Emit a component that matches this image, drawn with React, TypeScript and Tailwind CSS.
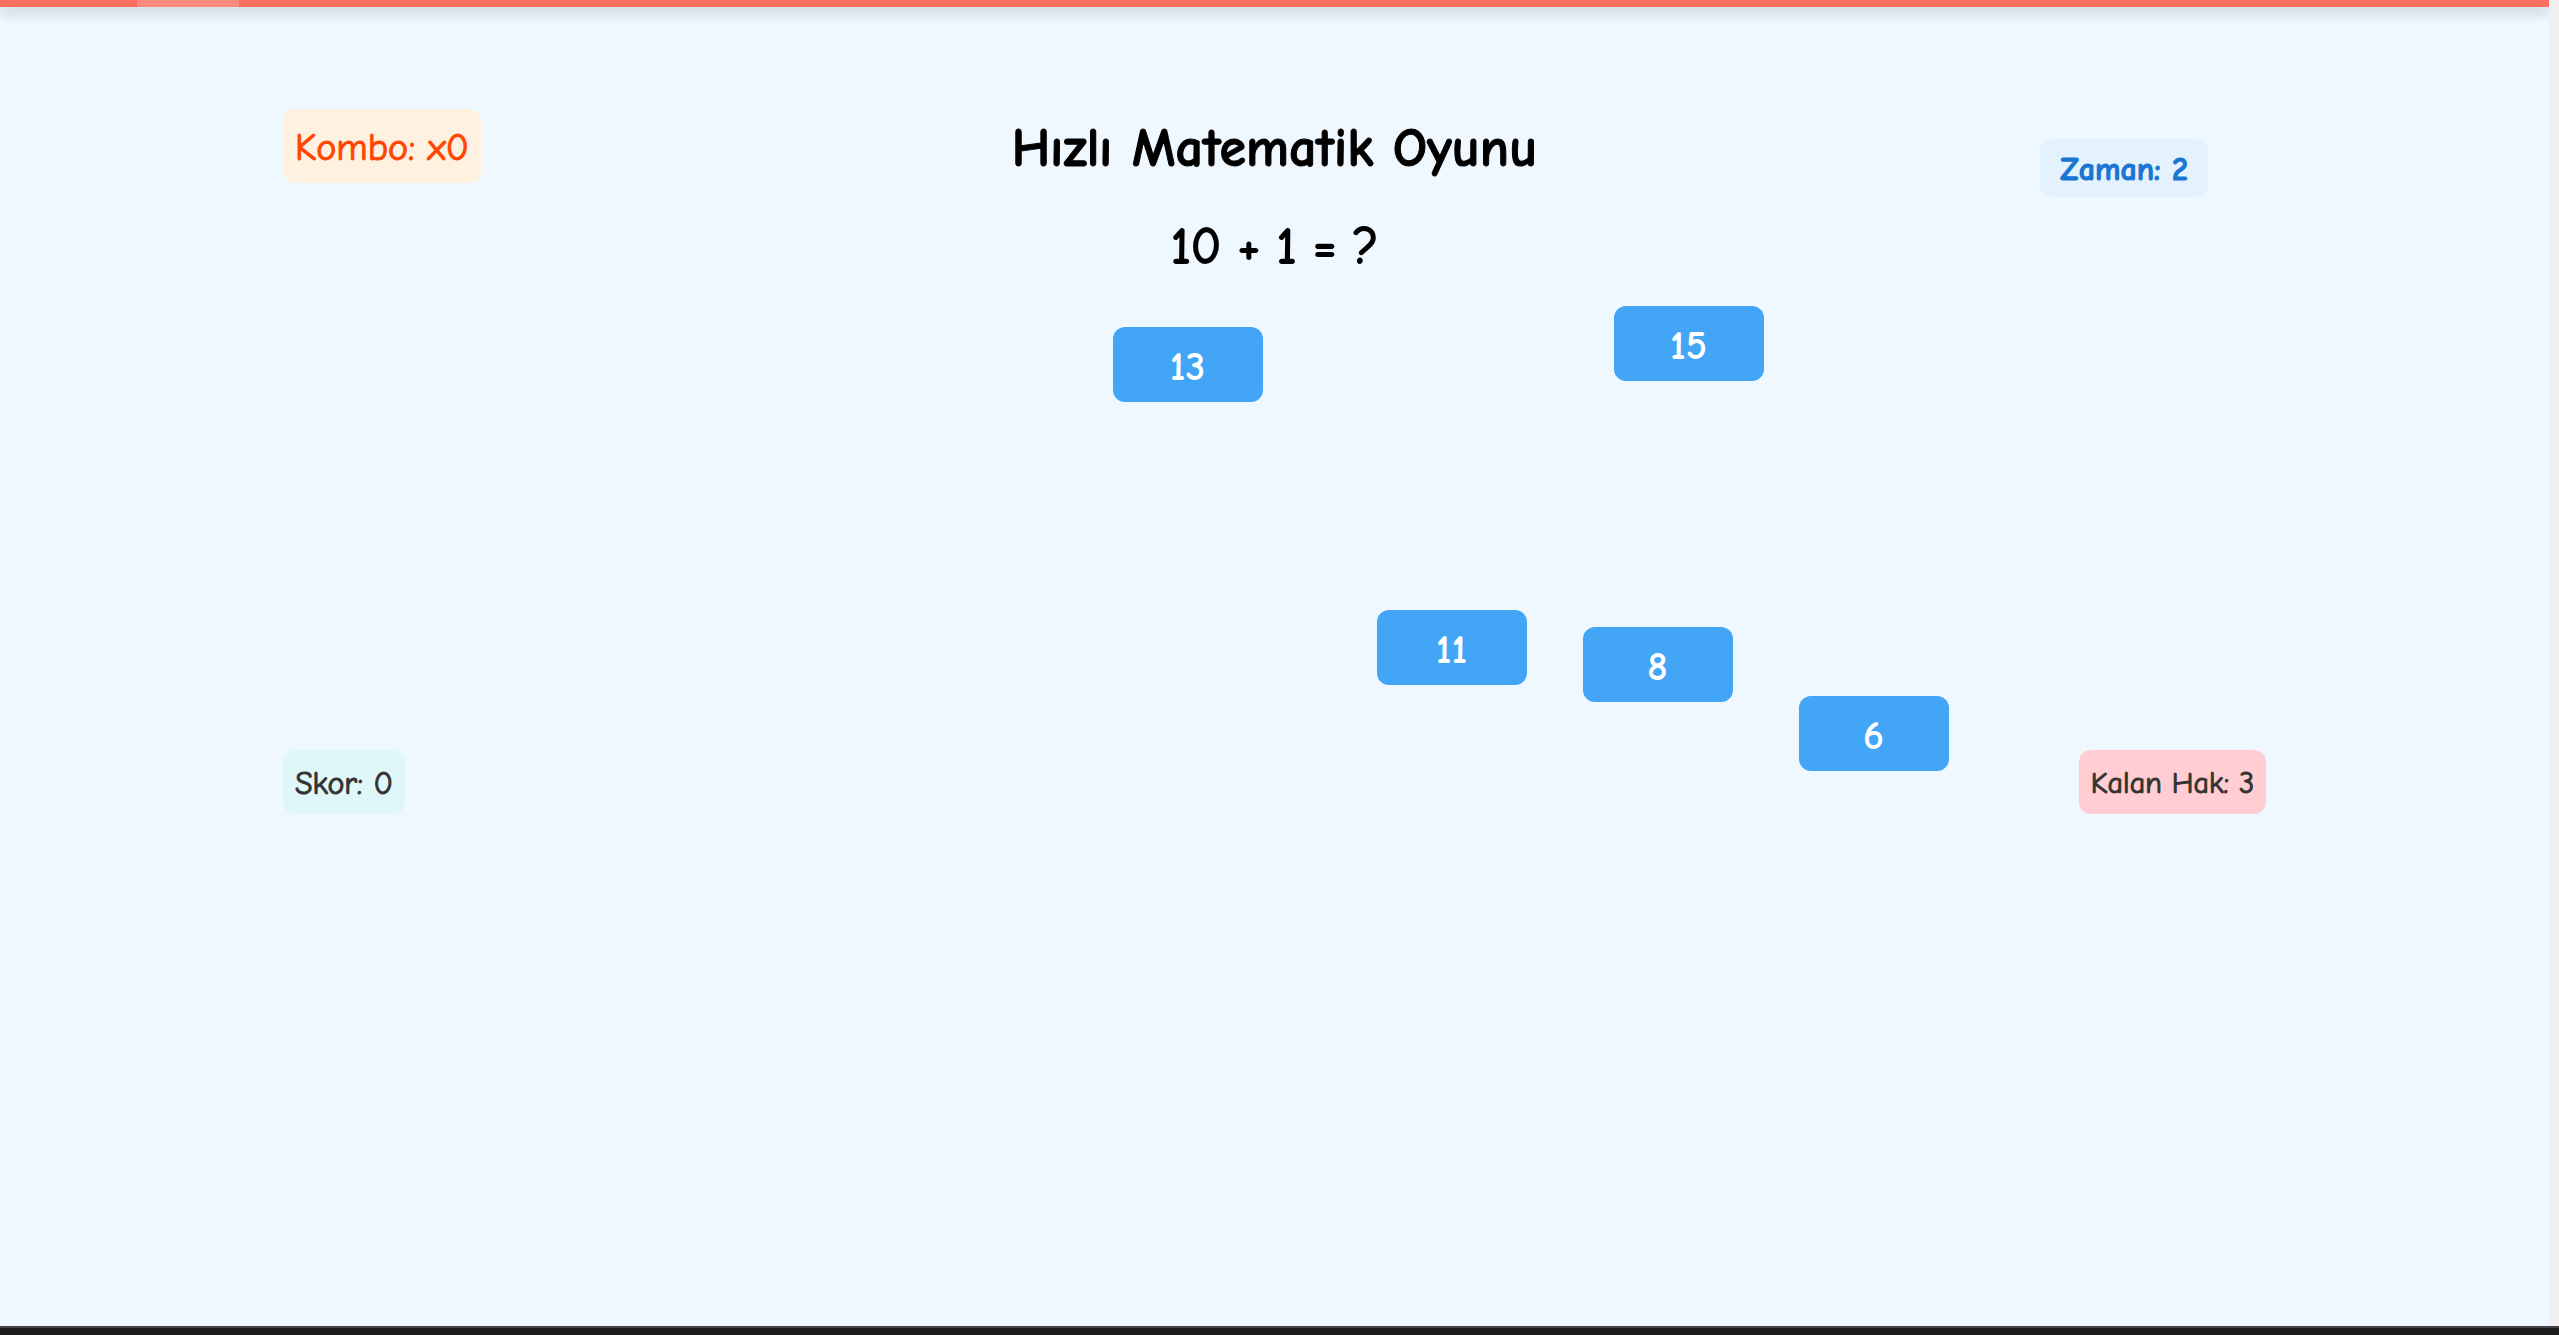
const answers = [
  { value: 13, place: 'left-[calc(50%-162px)] top-[32px]' },
  { value: 15, place: 'left-[calc(50%+339px)] top-[11px]' },
  { value: 11, place: 'left-[calc(50%+102px)] top-[315px]' },
  { value: 8, place: 'left-[calc(50%+308px)] top-[332px]' },
  { value: 6, place: 'left-[calc(50%+524px)] top-[401px]' },
];

function ProgressBar() {
  return (
    <div className="h-[7px] shrink-0 bg-[#ff6f61] pl-[137px] shadow-[0_6px_12px_rgba(0,0,0,0.2)]">
      <div className="h-full w-[102px] bg-white/20" />
    </div>
  );
}

function Header() {
  return (
    <header className="grid grid-cols-[1fr_auto_1fr] items-start">
      <div className="justify-self-start rounded-xl bg-[#fff1e0] px-3 pb-2.5 pt-3.5 text-[38px] leading-[50px] text-[#ff4500] [-webkit-text-stroke:1px]">
        Kombo: x0
      </div>
      <div className="flex flex-col items-center gap-[30px] pt-1.5 text-black">
        <h1 className="text-[54px] font-bold leading-[68px] [-webkit-text-stroke:1px]">Hızlı Matematik Oyunu</h1>
        <p className="text-[50px] leading-[68px] [-webkit-text-stroke:2px]">10 + 1 = ?</p>
      </div>
      <div className="mr-[58px] mt-[30px] justify-self-end rounded-xl bg-[#e3f2fd] px-5 pb-[6px] pt-[10px] text-[32px] font-bold leading-[42px] text-[#1976d2] [-webkit-text-stroke:1px]">
        Zaman: 2
      </div>
    </header>
  );
}

function AnswerBoard() {
  return (
    <section aria-label="Cevaplar" className="relative mt-3.5 h-[455px]">
      {answers.map(({ value, place }) => (
        <button
          key={value}
          type="button"
          className={`absolute flex h-[75px] w-[150px] items-center justify-center rounded-xl bg-[#42a5f5] pt-1 text-[40px] font-bold text-white ${place}`}
        >
          {value}
        </button>
      ))}
    </section>
  );
}

function Footer() {
  return (
    <footer className="flex justify-between leading-10 text-[#333] [-webkit-text-stroke:1px]">
      <div className="rounded-xl bg-[#e0f7fa] px-3 pb-2.5 pt-3.5 text-[32px]">Skor: 0</div>
      <div className="rounded-xl bg-[#ffcdd2] px-3 pb-2.5 pt-3.5 text-[30px]">Kalan Hak: 3</div>
    </footer>
  );
}

export default function App() {
  return (
    <div className="flex h-screen flex-col bg-[#f0f0f0] font-['Comic_Sans_MS','Comic_Neue',cursive]">
      <div className="flex min-h-0 flex-1">
        <main className="flex min-w-0 flex-1 flex-col overflow-hidden rounded-br-sm bg-[#f0f8ff]">
          <ProgressBar />
          <div className="px-[11.1%] pt-[102px]">
            <Header />
            <AnswerBoard />
            <Footer />
          </div>
        </main>
        <div className="w-[10px]" />
      </div>
      <div className="h-[9px] shrink-0 border-t-2 border-[#444] bg-[#1c1c1c]" />
    </div>
  );
}
